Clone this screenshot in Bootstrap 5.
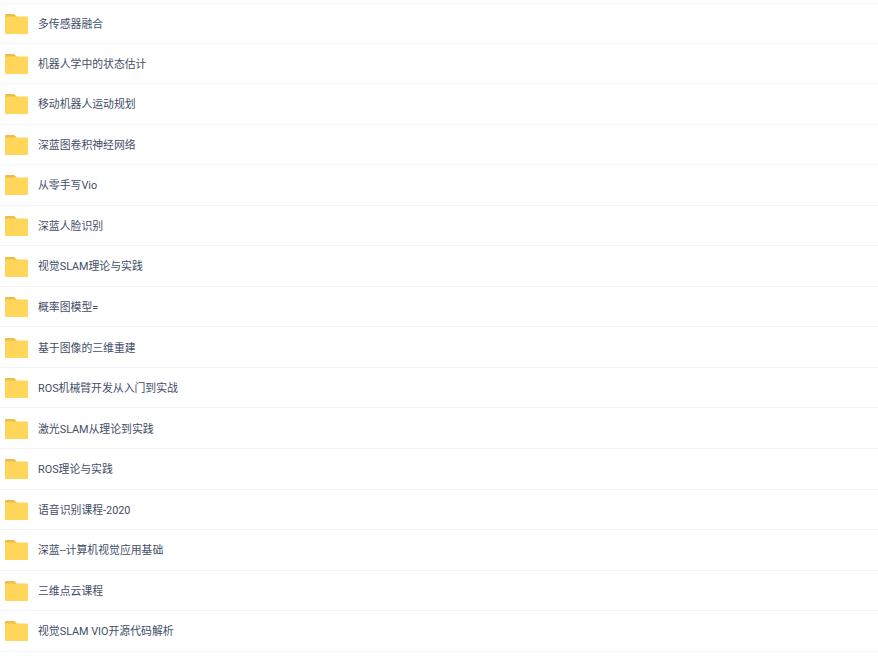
<!DOCTYPE html>
<html lang="zh-CN">
<head>
  <meta charset="UTF-8">
  <title>文件列表</title>
  <link href="https://cdn.jsdelivr.net/npm/bootstrap@5.3.0/dist/css/bootstrap.min.css" rel="stylesheet">
  <style>
    body {
      background-color: #fff;
      font-family: Roboto, "Noto Sans CJK SC", sans-serif;
      font-size: 10.85px;
      font-variant-ligatures: none;
      font-kerning: none;
      color: #424e67;
      overflow: hidden;
    }
    .file-list {
      padding-top: 3px;
    }
    .list-group-flush > .file-row {
      height: 40.56px;
      padding: 1px 0 0 5px;
      border-width: 0 0 1px;
      border-style: solid;
      border-color: #f2f3f8;
      color: #424e67;
      background: transparent;
    }
    .list-group-flush > .file-row:first-child {
      border-top-width: 1px;
    }
    .list-group-flush > .file-row:last-child {
      border-bottom-width: 1px;
    }
    .file-name {
      padding-top: 2px;
    }
    .folder-icon {
      width: 23px;
      height: 20px;
      flex-shrink: 0;
      margin-right: 10px;
    }
  </style>
</head>
<body>

  <div class="list-group list-group-flush file-list" id="fileList"></div>

  <script>
const names = [
  "多传感器融合",
  "机器人学中的状态估计",
  "移动机器人运动规划",
  "深蓝图卷积神经网络",
  "从零手写Vio",
  "深蓝人脸识别",
  "视觉SLAM理论与实践",
  "概率图模型=",
  "基于图像的三维重建",
  "ROS机械臂开发从入门到实战",
  "激光SLAM从理论到实践",
  "ROS理论与实践",
  "语音识别课程-2020",
  "深蓝--计算机视觉应用基础",
  "三维点云课程",
  "视觉SLAM VIO开源代码解析"
];

const folderSvg = `<svg class="folder-icon" viewBox="0 0 23 20">
  <path d="M0 1.2C0 .5.5 0 1.2 0h7.3c.6 0 1 .2 1.4.6L12 3H0z" fill="#eebc4b"/>
  <path d="M0 3.6C0 3 .5 2.6 1.2 2.6h20.6c.7 0 1.2.5 1.2 1.2v14.9c0 .7-.5 1.3-1.2 1.3H1.2C.5 20 0 19.4 0 18.7z" fill="#ffd659"/>
</svg>`;

const list = document.getElementById("fileList");
names.forEach(name => {
  const row = document.createElement("div");
  row.className = "list-group-item d-flex align-items-center file-row";
  row.innerHTML = `${folderSvg}<span class="file-name">${name}</span>`;
  list.appendChild(row);
});
</script>

<script src="https://cdn.jsdelivr.net/npm/bootstrap@5.3.0/dist/js/bootstrap.bundle.min.js"></script>
</body>
</html>
